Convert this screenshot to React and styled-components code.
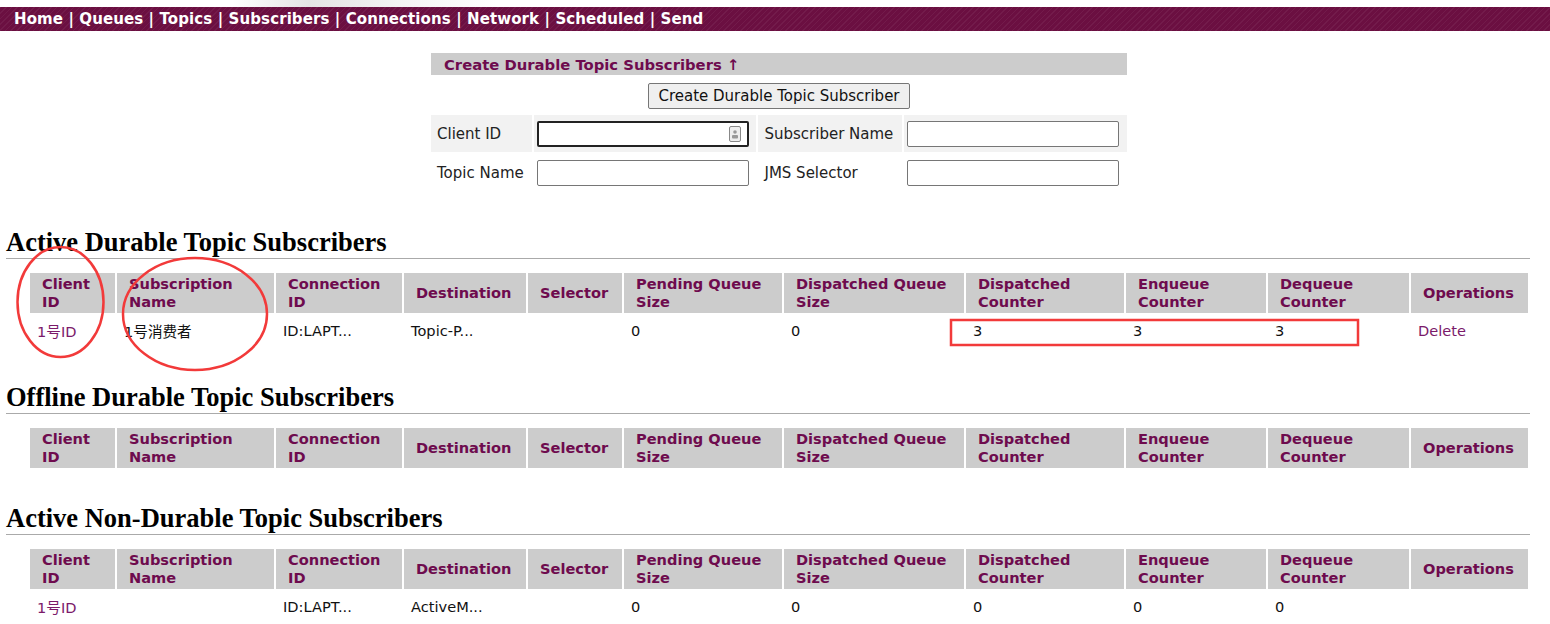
import React from "react";
import styled, { createGlobalStyle } from "styled-components";

const GlobalStyle = createGlobalStyle`
  body {
    margin: 0;
    background: #fff;
    font-family: "DejaVu Sans", Verdana, "Noto Sans CJK SC", sans-serif;
    color: #111;
  }
`;

const columns = [
  { label: "Client ID", width: 85 },
  { label: "Subscription Name", width: 157 },
  { label: "Connection ID", width: 126 },
  { label: "Destination", width: 122 },
  { label: "Selector", width: 94 },
  { label: "Pending Queue Size", width: 158 },
  { label: "Dispatched Queue Size", width: 180 },
  { label: "Dispatched Counter", width: 158 },
  { label: "Enqueue Counter", width: 140 },
  { label: "Dequeue Counter", width: 141 },
  { label: "Operations", width: 117 },
];

const headLabels = [
  ["Client", "ID"],
  ["Subscription", "Name"],
  ["Connection", "ID"],
  ["Destination"],
  ["Selector"],
  ["Pending Queue", "Size"],
  ["Dispatched Queue", "Size"],
  ["Dispatched", "Counter"],
  ["Enqueue", "Counter"],
  ["Dequeue", "Counter"],
  ["Operations"],
];

const sections = [
  {
    title: "Active Durable Topic Subscribers",
    gap: 36,
    rows: [["1号ID", "1号消费者", "ID:LAPT...", "Topic-P...", "", "0", "0", "3", "3", "3", "Delete"]],
  },
  { title: "Offline Durable Topic Subscribers", gap: 35, rows: [] },
  {
    title: "Active Non-Durable Topic Subscribers",
    gap: 37,
    rows: [["1号ID", "", "ID:LAPT...", "ActiveM...", "", "0", "0", "0", "0", "0", ""]],
  },
];

function App() {
  return (
    <Page>
      <GlobalStyle />
      <TopStrip />
      <NavBar>
        {["Home", "Queues", "Topics", "Subscribers", "Connections", "Network", "Scheduled", "Send"].map(
          (item, i) => (
            <React.Fragment key={item}>
              {i > 0 && " | "}
              <NavLink>{item}</NavLink>
            </React.Fragment>
          )
        )}
      </NavBar>

      <FormWrap>
        <FormBox>
          <FormTitle>Create Durable Topic Subscribers ↑</FormTitle>
          <ButtonRow>
            <Button>Create Durable Topic Subscriber</Button>
          </ButtonRow>
          <FormTable>
            <tbody>
              <FormRow shaded>
                <Label>Client ID</Label>
                <Field>
                  <InputBox focused>
                    <KeyIcon width="12" height="16" viewBox="0 0 12 16">
                      <rect x="0.5" y="0.5" width="11" height="15" rx="1.5" fill="#eee" stroke="#888" />
                      <circle cx="6" cy="6" r="1.8" fill="#999" />
                      <rect x="3" y="9" width="6" height="3.5" rx="1" fill="#999" />
                    </KeyIcon>
                  </InputBox>
                </Field>
                <Label>Subscriber Name</Label>
                <Field>
                  <InputBox />
                </Field>
              </FormRow>
              <FormRow>
                <Label>Topic Name</Label>
                <Field>
                  <InputBox />
                </Field>
                <Label>JMS Selector</Label>
                <Field>
                  <InputBox />
                </Field>
              </FormRow>
            </tbody>
          </FormTable>
        </FormBox>
      </FormWrap>

      {sections.map((section) => (
        <Section key={section.title} gap={section.gap}>
          <Heading>{section.title}</Heading>
          <Rule />
          <DataTable>
            <colgroup>
              {columns.map((c) => (
                <col key={c.label} style={{ width: c.width }} />
              ))}
            </colgroup>
            <thead>
              <tr>
                {headLabels.map((lines) => (
                  <HeadCell key={lines.join(" ")}>
                    {lines.map((l) => (
                      <div key={l}>{l}</div>
                    ))}
                  </HeadCell>
                ))}
              </tr>
            </thead>
            <tbody>
              {section.rows.map((row, ri) => (
                <tr key={ri}>
                  {row.map((cell, ci) => (
                    <Cell key={ci} link={ci === 0 || ci === 10}>
                      {cell}
                    </Cell>
                  ))}
                </tr>
              ))}
            </tbody>
          </DataTable>
        </Section>
      ))}

      <Marks width="1550" height="624" viewBox="0 0 1550 624">
        <ellipse cx="60.5" cy="302" rx="43" ry="55" />
        <ellipse cx="195" cy="314" rx="72" ry="56" />
        <rect x="951" y="320" width="407" height="25" />
      </Marks>
    </Page>
  );
}

const Page = styled.div`
  position: relative;
  width: 1550px;
  height: 624px;
  overflow: hidden;
`;

const TopStrip = styled.div`
  height: 7px;
  background: linear-gradient(90deg, #fff 0%, #fff 15%, #e4e4e4 20%, #f4f4f4 26%, #fff 32%, #fff 100%);
`;

const NavBar = styled.div`
  height: 24px;
  padding-left: 14px;
  display: flex;
  align-items: center;
  white-space: pre;
  background-color: #6b0f41;
  background-image: repeating-linear-gradient(
    135deg,
    rgba(255, 255, 255, 0.05) 0px,
    rgba(255, 255, 255, 0.05) 1px,
    transparent 1px,
    transparent 4px
  );
  color: #fff;
  font-weight: bold;
  font-size: 15px;
  letter-spacing: 0.1px;
`;

const NavLink = styled.span`
  color: #fff;
`;

const FormWrap = styled.div`
  display: flex;
  justify-content: center;
  padding: 22px 0 0 8px;
`;

const FormBox = styled.div`
  width: 696px;
`;

const FormTitle = styled.div`
  height: 22px;
  line-height: 23px;
  background: #cccccc;
  padding-left: 13px;
  color: #6e0b4e;
  font-weight: bold;
  font-size: 14.8px;
`;

const ButtonRow = styled.div`
  display: flex;
  justify-content: center;
  padding: 8px 0 6px;
`;

const Button = styled.button`
  height: 26px;
  padding: 0 9px;
  font-family: "DejaVu Sans", Verdana, sans-serif;
  font-size: 15px;
  color: #111;
  background: #efefef;
  border: 1px solid #767676;
  border-radius: 2px;
`;

const FormTable = styled.table`
  border-collapse: separate;
  border-spacing: 2px;
  margin: -2px 0 0 -2px;
  width: calc(100% + 4px);
`;

const FormRow = styled.tr`
  height: 37px;
  background: ${(p) => (p.shaded ? "#f2f2f2" : "#fff")};
`;

const Label = styled.td`
  padding: 0 6px;
  font-size: 15px;
  color: #222;
  white-space: nowrap;
`;

const Field = styled.td`
  padding: 0 3px;
`;

const InputBox = styled.div`
  position: relative;
  box-sizing: border-box;
  width: 212px;
  height: 26px;
  background: #fff;
  border: ${(p) => (p.focused ? "2px solid #222" : "1px solid #767676")};
  border-radius: 2px;
`;

const KeyIcon = styled.svg`
  position: absolute;
  right: 6px;
  top: 3px;
`;

const Section = styled.div`
  padding: ${(p) => p.gap}px 20px 0 6px;
`;

const Heading = styled.h2`
  margin: 0;
  font-family: "Liberation Serif", "Times New Roman", serif;
  font-size: 26.5px;
  font-weight: bold;
  line-height: 26px;
  color: #000;
`;

const Rule = styled.div`
  height: 1px;
  background: #aaa;
  margin: 3px 0 14px;
`;

const DataTable = styled.table`
  table-layout: fixed;
  border-collapse: separate;
  border-spacing: 2px 0;
  margin-left: 22px;
`;

const HeadCell = styled.th`
  height: 40px;
  padding: 0 0 0 12px;
  background: #cccccc;
  color: #6e0b4e;
  font-size: 14.6px;
  font-weight: bold;
  text-align: left;
  line-height: 18px;
  white-space: nowrap;
`;

const Cell = styled.td`
  height: 34px;
  padding: 0 0 2px 7px;
  font-size: 14.6px;
  color: ${(p) => (p.link ? "#7b1a6a" : "#111")};
  white-space: nowrap;
`;

const Marks = styled.svg`
  position: absolute;
  left: 0;
  top: 0;
  pointer-events: none;
  fill: none;
  stroke: #f23a3a;
  stroke-width: 2.5;
`;

export default App;
